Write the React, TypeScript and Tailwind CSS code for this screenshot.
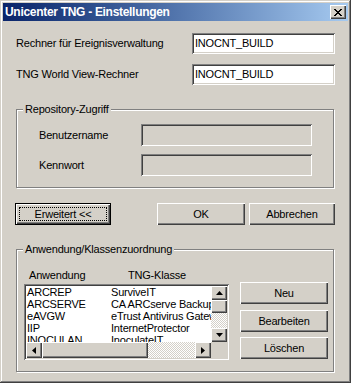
import React from "react";

const raised =
  "bg-[#d4d0c8] shadow-[inset_1px_1px_#ffffff,inset_-1px_-1px_#404040,inset_-2px_-2px_#808080]";
const sunken =
  "shadow-[inset_1px_1px_#808080,inset_-1px_-1px_#ffffff,inset_2px_2px_#404040,inset_-2px_-2px_#d4d0c8]";
const etched = "border border-[#808080] shadow-[inset_1px_1px_#ffffff,1px_1px_#ffffff]";
const checker =
  "bg-[conic-gradient(#ffffff_25%,#d4d0c8_0_50%,#ffffff_0_75%,#d4d0c8_0)] bg-[length:2px_2px]";

// kleine Pfeile für die Bildlaufleisten
function Arrow({ dir }: { dir: "up" | "down" | "left" | "right" }) {
  const pts = {
    up: "3.5,0 7,4 0,4",
    down: "0,0 7,0 3.5,4",
    left: "4,0 4,7 0,3.5",
    right: "0,0 4,3.5 0,7",
  }[dir];
  const vert = dir === "up" || dir === "down";
  return (
    <svg width={vert ? 7 : 4} height={vert ? 4 : 7} viewBox={vert ? "0 0 7 4" : "0 0 4 7"}>
      <polygon points={pts} fill="#000" />
    </svg>
  );
}

function CloseGlyph() {
  const rows = ["11000011", "01100110", "00111100", "00011000", "00111100", "01100110", "11000011"];
  return (
    <svg width="8" height="7" viewBox="0 0 8 7" shapeRendering="crispEdges">
      {rows.map((r, y) =>
        r.split("").map((c, x) => (c === "1" ? <rect key={`${x}-${y}`} x={x} y={y} width="1" height="1" fill="#000" /> : null))
      )}
    </svg>
  );
}

function Button({ label, className = "" }: { label: string; className?: string }) {
  return (
    <div className={`${raised} h-[22px] flex items-center justify-center ${className}`}>
      <span>{label}</span>
    </div>
  );
}

const rows = [
  ["ARCREP", "SurviveIT"],
  ["ARCSERVE", "CA ARCserve Backup"],
  ["eAVGW", "eTrust Antivirus Gateway"],
  ["IIP", "InternetProtector"],
  ["INOCULAN", "InoculateIT"],
];

export default function App() {
  return (
    <div
      className="w-[351px] h-[383px] p-[3px] bg-[#d4d0c8] text-black text-[11px] leading-[13px] tracking-[-0.2px] shadow-[inset_-1px_-1px_#404040,inset_1px_1px_#d4d0c8,inset_-2px_-2px_#808080,inset_2px_2px_#ffffff] overflow-hidden"
      style={{ fontFamily: '"Liberation Sans", Arial, sans-serif' }}
    >
      {/* Titelleiste */}
      <div className="h-[18px] flex items-center bg-gradient-to-r from-[#0a246a] to-[#a6caf0] pl-[2px] pr-[2px]">
        <span className="text-white font-bold text-[12px] tracking-[-0.3px]">Unicenter TNG - Einstellungen</span>
        <div className={`${raised} ml-auto w-[16px] h-[14px] flex items-center justify-center`}>
          <CloseGlyph />
        </div>
      </div>

      <div className="px-[13px]">
        <div className="mt-[12px] h-[21px] flex items-center">
          <span>Rechner für Ereignisverwaltung</span>
          <div className={`${sunken} ml-auto w-[143px] h-[21px] bg-white flex items-center pl-[3px]`}>INOCNT_BUILD</div>
        </div>
        <div className="mt-[10px] h-[21px] flex items-center">
          <span>TNG World View-Rechner</span>
          <div className={`${sunken} ml-auto w-[143px] h-[21px] bg-white flex items-center pl-[3px]`}>INOCNT_BUILD</div>
        </div>

        {/* Repository-Zugriff */}
        <div className={`${etched} relative mt-[24px] w-[318px] h-[79px] pt-[14px] pl-[22px]`}>
          <span className="absolute left-[6px] -top-[7px] bg-[#d4d0c8] px-[2px]">Repository-Zugriff</span>
          <div className="flex items-center h-[22px]">
            <span className="w-[102px]">Benutzername</span>
            <div className={`${sunken} w-[171px] h-[22px]`} />
          </div>
          <div className="flex items-center h-[22px] mt-[8px]">
            <span className="w-[102px]">Kennwort</span>
            <div className={`${sunken} w-[171px] h-[22px]`} />
          </div>
        </div>

        {/* Schaltflächen */}
        <div className="mt-[15px] flex">
          <div className="-ml-px w-[96px] h-[22px] border border-black">
            <div className={`${raised} h-full p-[3px]`}>
              <div className="h-full border border-dotted border-black flex items-center justify-center">Erweitert &lt;&lt;</div>
            </div>
          </div>
          <Button label="OK" className="ml-[46px] w-[88px]" />
          <Button label="Abbrechen" className="ml-[4px] w-[86px]" />
        </div>

        {/* Anwendung/Klassenzuordnung */}
        <div className={`${etched} relative mt-[24px] w-[318px] h-[123px] flex pl-[7px]`}>
          <span className="absolute left-[6px] -top-[7px] bg-[#d4d0c8] px-[2px]">Anwendung/Klassenzuordnung</span>
          <div className="pt-[19px]">
            <div className="flex">
              <span className="w-[104px] pl-[5px]">Anwendung</span>
              <span>TNG-Klasse</span>
            </div>
            <div className={`${sunken} mt-[2px] w-[205px] h-[76px] bg-white p-[2px] flex flex-col`}>
              <div className="flex h-[56px]">
                <div className="flex-1 min-w-0 overflow-hidden leading-[12px]">
                  {rows.map(([a, b]) => (
                    <div key={a} className="flex h-[12px] whitespace-nowrap">
                      <span className="w-[85px] shrink-0 pl-[1px]">{a}</span>
                      <span>{b}</span>
                    </div>
                  ))}
                </div>
                <div className="w-[16px] shrink-0 flex flex-col">
                  <div className={`${raised} h-[14px] flex items-center justify-center`}>
                    <Arrow dir="up" />
                  </div>
                  <div className={`${raised} h-[13px]`} />
                  <div className={`${checker} flex-1`} />
                  <div className={`${raised} h-[14px] flex items-center justify-center`}>
                    <Arrow dir="down" />
                  </div>
                </div>
              </div>
              <div className="flex h-[16px]">
                <div className={`${raised} w-[16px] flex items-center justify-center`}>
                  <Arrow dir="left" />
                </div>
                <div className={`${raised} w-[106px]`} />
                <div className={`${checker} flex-1`} />
                <div className={`${raised} w-[16px] flex items-center justify-center`}>
                  <Arrow dir="right" />
                </div>
                <div className="w-[16px] bg-[#d4d0c8]" />
              </div>
            </div>
          </div>
          <div className="ml-[11px] pt-[32px] flex flex-col">
            <Button label="Neu" className="w-[88px]" />
            <Button label="Bearbeiten" className="w-[88px] mt-[6px]" />
            <Button label="Löschen" className="w-[88px] mt-[5px]" />
          </div>
        </div>
      </div>
    </div>
  );
}
